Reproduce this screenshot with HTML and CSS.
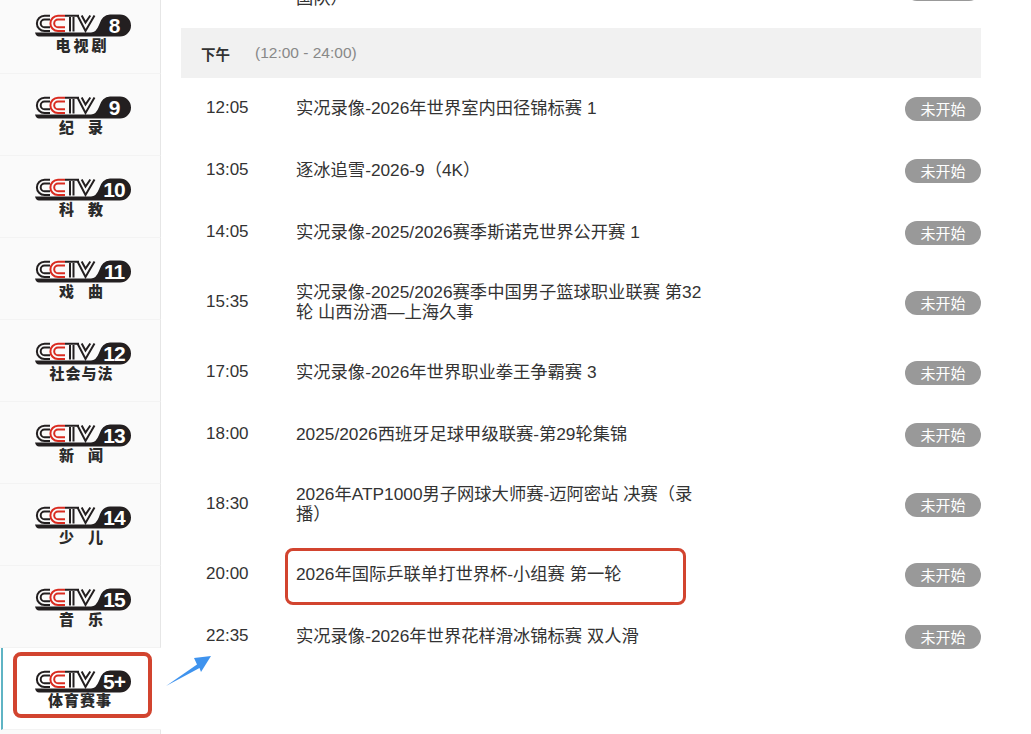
FILE: index.html
```html
<!DOCTYPE html>
<html lang="zh-CN">
<head>
  <meta charset="UTF-8" />
  <title>CCTV 节目单</title>
  <link rel="stylesheet" href="styles.css">
</head>
<body>

  <!-- logo shared by every channel -->
  <svg class="defs" width="0" height="0">
    <symbol id="cctv" viewBox="0 0 96 24">
      <path class="mark" d="M0 18.600H56Q61 18.600 64 11Q67 .5 75 .5H85A11 11 0 0 1 85 22.500H4Q1 22.500 0 18.600Z"/>
      <g class="ring">
        <path d="M15 1.800H9.500A7.600 7.600 0 0 0 9.500 17H15"/>
        <path d="M15 5.600H9.500A3.800 3.800 0 0 0 9.500 13.200H15"/>
      </g>
      <g class="ring red">
        <path d="M30 1.800H23A7.600 7.600 0 0 0 23 17H30"/>
        <path d="M30 5.600H23A3.800 3.800 0 0 0 23 13.200H30"/>
      </g>
      <g class="ring">
        <path d="M30 1.800H44M35 3V17.500M38.500 3V17.500"/>
        <path d="M42.500 1.500L50.500 17L59.500 1.500M46.700 1.500L50.500 8.500L55.300 1.500"/>
      </g>
    </symbol>
  </svg>

  <div class="page">
    <aside class="channels">
      <div class="channel">
        <svg class="logo"><use href="#cctv"/><text x="79" y="19">8</text></svg>
        <div class="name">电视剧</div>
      </div>
      <div class="channel">
        <svg class="logo"><use href="#cctv"/><text x="79" y="19">9</text></svg>
        <div class="name wide">纪录</div>
      </div>
      <div class="channel">
        <svg class="logo"><use href="#cctv"/><text x="79" y="19">10</text></svg>
        <div class="name wide">科教</div>
      </div>
      <div class="channel">
        <svg class="logo"><use href="#cctv"/><text x="79" y="19">11</text></svg>
        <div class="name wide">戏曲</div>
      </div>
      <div class="channel">
        <svg class="logo"><use href="#cctv"/><text x="79" y="19">12</text></svg>
        <div class="name four">社会与法</div>
      </div>
      <div class="channel">
        <svg class="logo"><use href="#cctv"/><text x="79" y="19">13</text></svg>
        <div class="name wide">新闻</div>
      </div>
      <div class="channel">
        <svg class="logo"><use href="#cctv"/><text x="79" y="19">14</text></svg>
        <div class="name wide">少儿</div>
      </div>
      <div class="channel">
        <svg class="logo"><use href="#cctv"/><text x="79" y="19">15</text></svg>
        <div class="name wide">音乐</div>
      </div>
      <div class="channel active">
        <svg class="logo"><use href="#cctv"/><text x="79" y="19">5+</text></svg>
        <div class="name four">体育赛事</div>
        <span class="mark-box side"></span>
      </div>
      <div class="channel"></div>
    </aside>

    <main class="schedule">
      <div class="row">
        <span class="time"></span>
        <span class="title">实况录像-2026年世界花样滑冰锦标赛 团体赛（中<br>国队）</span>
        <span class="status">未开始</span>
      </div>

      <div class="period"><b>下午</b><span>(12:00 - 24:00)</span></div>

      <div class="row">
        <span class="time">12:05</span>
        <span class="title">实况录像-2026年世界室内田径锦标赛 1</span>
        <span class="status">未开始</span>
      </div>
      <div class="row">
        <span class="time">13:05</span>
        <span class="title">逐冰追雪-2026-9（4K）</span>
        <span class="status">未开始</span>
      </div>
      <div class="row">
        <span class="time">14:05</span>
        <span class="title">实况录像-2025/2026赛季斯诺克世界公开赛 1</span>
        <span class="status">未开始</span>
      </div>
      <div class="row">
        <span class="time">15:35</span>
        <span class="title">实况录像-2025/2026赛季中国男子篮球职业联赛 第32轮 山西汾酒—上海久事</span>
        <span class="status">未开始</span>
      </div>
      <div class="row">
        <span class="time">17:05</span>
        <span class="title">实况录像-2026年世界职业拳王争霸赛 3</span>
        <span class="status">未开始</span>
      </div>
      <div class="row">
        <span class="time">18:00</span>
        <span class="title">2025/2026西班牙足球甲级联赛-第29轮集锦</span>
        <span class="status">未开始</span>
      </div>
      <div class="row">
        <span class="time">18:30</span>
        <span class="title">2026年ATP1000男子网球大师赛-迈阿密站 决赛（录播）</span>
        <span class="status">未开始</span>
      </div>
      <div class="row">
        <span class="time">20:00</span>
        <span class="title">2026年国际乒联单打世界杯-小组赛 第一轮</span>
        <span class="status">未开始</span>
        <span class="mark-box pick"></span>
      </div>
      <div class="row">
        <span class="time">22:35</span>
        <span class="title">实况录像-2026年世界花样滑冰锦标赛 双人滑</span>
        <span class="status">未开始</span>
      </div>
    </main>
  </div>

  <!-- arrow drawn on top of the screenshot -->
  <svg class="arrow" width="50" height="36" viewBox="0 0 50 36">
    <path d="M1 31L32 9.500L29 3L46 1L36 17L34.500 13Z"/>
  </svg>

</body>
</html>
```

FILE: styles.css
```css
* { box-sizing: border-box; }
html, body {
  height: 734px;
  overflow: hidden;
}
body {
  margin: 0;
  position: relative;
  background: #ffffff;
  color: #333333;
  font-family: 'Liberation Sans', 'Noto Sans CJK SC', sans-serif;
}
.defs {
  position: absolute;
}
.page {
  display: flex;
  align-items: flex-start;
  height: 734px;
  overflow: hidden;
}

/* left column */
.channels {
  flex: none;
  width: 161px;
  margin-top: -8px;
}
.channel {
  position: relative;
  height: 82px;
  padding: 22px 0 0 35px;
  background: #fafafa;
  border-right: 1px solid #e6e6e6;
  border-bottom: 1px solid #f3f3f3;
}
.channel.active {
  background: #ffffff;
  border-right: 0;
  border-left: 2px solid #5fb4c4;
  margin-left: 1px;
  padding-left: 32px;
}
.channel.active .name {
  width: 89px;
  margin-top: -1px;
}
.logo {
  display: block;
  width: 96px;
  height: 24px;
}
.logo text {
  fill: #ffffff;
  font-family: 'Liberation Sans', sans-serif;
  font-size: 21px;
  font-weight: bold;
  letter-spacing: -1px;
  text-anchor: middle;
}
.mark { fill: #231f20; }
.ring {
  fill: none;
  stroke: #231f20;
  stroke-width: 2;
}
.ring.red { stroke: #d92b20; }
.name {
  width: 92px;
  text-align: center;
  font-family: 'Noto Sans CJK SC', sans-serif;
  font-size: 15px;
  line-height: 14px;
  font-weight: 900;
  letter-spacing: 3px;
  text-indent: 3px;
  color: #2b2b2b;
}
.name.wide { letter-spacing: 14px; text-indent: 14px; }
.name.four { letter-spacing: 1px; text-indent: 1px; }

/* right column */
.schedule {
  width: 800px;
  margin: -50px 0 0 20px;
}
.period {
  display: flex;
  align-items: center;
  height: 50px;
  padding-left: 20px;
  background: #f1f1f1;
}
.period b {
  width: 54px;
  font-size: 14.500px;
  color: #333333;
}
.period span {
  font-size: 15.500px;
  color: #888888;
}
.row {
  position: relative;
  display: flex;
  align-items: center;
  padding: 18px 0 19px;
  min-height: 62px;
  font-size: 17.300px;
  line-height: 20px;
}
.time {
  flex: none;
  width: 115px;
  padding-left: 25px;
  padding-bottom: 1px;
  font-size: 17px;
}
.title {
  width: 412px;
  padding-bottom: 1px;
}
.status {
  width: 76px;
  height: 24px;
  margin-left: auto;
  border-radius: 12px;
  background: #999999;
  color: #ffffff;
  font-size: 15px;
  line-height: 25px;
  text-align: center;
}

/* red boxes added on top */
.mark-box {
  position: absolute;
  border: 3px solid #d2442f;
  border-radius: 8px;
}
.mark-box.pick {
  left: 104px;
  top: 4px;
  width: 401px;
  height: 57px;
}
.mark-box.side {
  left: 10px;
  top: 4px;
  width: 139px;
  height: 66px;
  border-width: 4px;
}
.arrow {
  position: absolute;
  left: 165px;
  top: 655px;
}
.arrow path { fill: #3f93ee; }
```
